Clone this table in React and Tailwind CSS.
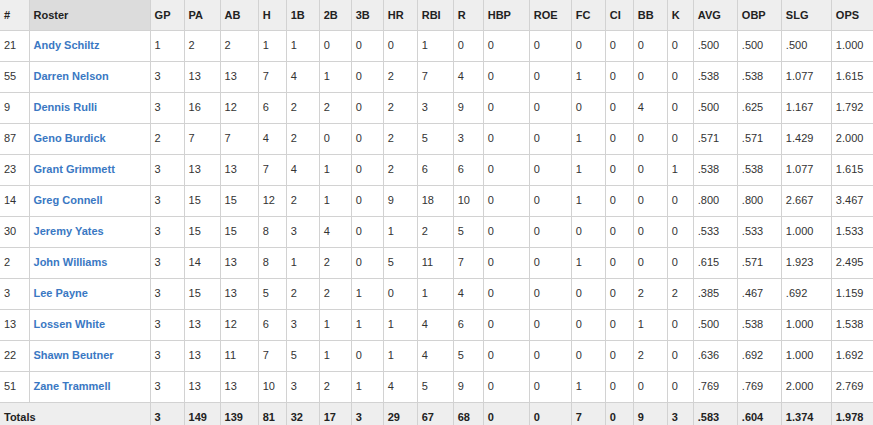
import React from "react";

const cols = [29, 121, 34, 36, 38, 28, 33, 32, 32, 34, 36, 30, 46, 42, 34, 28, 34, 26, 44, 44, 50, 42];
const heads = ["#", "Roster", "GP", "PA", "AB", "H", "1B", "2B", "3B", "HR", "RBI", "R", "HBP", "ROE", "FC", "CI", "BB", "K", "AVG", "OBP", "SLG", "OPS"];

const rows = [
  ["21", "Andy Schiltz", "1", "2", "2", "1", "1", "0", "0", "0", "1", "0", "0", "0", "0", "0", "0", "0", ".500", ".500", ".500", "1.000"],
  ["55", "Darren Nelson", "3", "13", "13", "7", "4", "1", "0", "2", "7", "4", "0", "0", "1", "0", "0", "0", ".538", ".538", "1.077", "1.615"],
  ["9", "Dennis Rulli", "3", "16", "12", "6", "2", "2", "0", "2", "3", "9", "0", "0", "0", "0", "4", "0", ".500", ".625", "1.167", "1.792"],
  ["87", "Geno Burdick", "2", "7", "7", "4", "2", "0", "0", "2", "5", "3", "0", "0", "1", "0", "0", "0", ".571", ".571", "1.429", "2.000"],
  ["23", "Grant Grimmett", "3", "13", "13", "7", "4", "1", "0", "2", "6", "6", "0", "0", "1", "0", "0", "1", ".538", ".538", "1.077", "1.615"],
  ["14", "Greg Connell", "3", "15", "15", "12", "2", "1", "0", "9", "18", "10", "0", "0", "1", "0", "0", "0", ".800", ".800", "2.667", "3.467"],
  ["30", "Jeremy Yates", "3", "15", "15", "8", "3", "4", "0", "1", "2", "5", "0", "0", "0", "0", "0", "0", ".533", ".533", "1.000", "1.533"],
  ["2", "John Williams", "3", "14", "13", "8", "1", "2", "0", "5", "11", "7", "0", "0", "1", "0", "0", "0", ".615", ".571", "1.923", "2.495"],
  ["3", "Lee Payne", "3", "15", "13", "5", "2", "2", "1", "0", "1", "4", "0", "0", "0", "0", "2", "2", ".385", ".467", ".692", "1.159"],
  ["13", "Lossen White", "3", "13", "12", "6", "3", "1", "1", "1", "4", "6", "0", "0", "0", "0", "1", "0", ".500", ".538", "1.000", "1.538"],
  ["22", "Shawn Beutner", "3", "13", "11", "7", "5", "1", "0", "1", "4", "5", "0", "0", "0", "0", "2", "0", ".636", ".692", "1.000", "1.692"],
  ["51", "Zane Trammell", "3", "13", "13", "10", "3", "2", "1", "4", "5", "9", "0", "0", "1", "0", "0", "0", ".769", ".769", "2.000", "2.769"],
];

const totals = ["3", "149", "139", "81", "32", "17", "3", "29", "67", "68", "0", "0", "7", "0", "9", "3", ".583", ".604", "1.374", "1.978"];

export default function App() {
  return (
    <div className="w-[873px] h-[425px] overflow-hidden bg-white" style={{ fontFamily: '"Liberation Sans", Arial, sans-serif' }}>
      <table className="table-fixed border-collapse text-[11px] text-[#333]" style={{ width: 874 }}>
        <colgroup>
          {cols.map((w, i) => (
            <col key={i} style={{ width: w }} />
          ))}
        </colgroup>
        <thead>
          <tr className="h-[30px]">
            {heads.map((h, i) => (
              <th
                key={i}
                className={`border-b border-r border-[#d2d2d2] pl-[4px] pr-0 text-left font-bold text-[#222] ${i === 1 ? "bg-[#dcdcdc]" : "bg-[#eeeeee]"}`}
              >
                {h}
              </th>
            ))}
          </tr>
        </thead>
        <tbody>
          {rows.map((r, ri) => (
            <tr key={ri} className="h-[31px]">
              {r.map((c, ci) => (
                <td
                  key={ci}
                  className={`border-b border-r border-[#d2d2d2] pl-[4px] pr-0 text-left ${ci === 1 ? "font-bold text-[#3a78c3]" : ""}`}
                >
                  {c}
                </td>
              ))}
            </tr>
          ))}
          <tr className="h-[31px] bg-[#eeeeee] font-bold text-[#222]">
            <td colSpan={2} className="border-b border-r border-[#d2d2d2] pl-[4px] text-left">Totals</td>
            {totals.map((c, ci) => (
              <td key={ci} className="border-b border-r border-[#d2d2d2] pl-[4px] text-left">
                {c}
              </td>
            ))}
          </tr>
        </tbody>
      </table>
    </div>
  );
}
